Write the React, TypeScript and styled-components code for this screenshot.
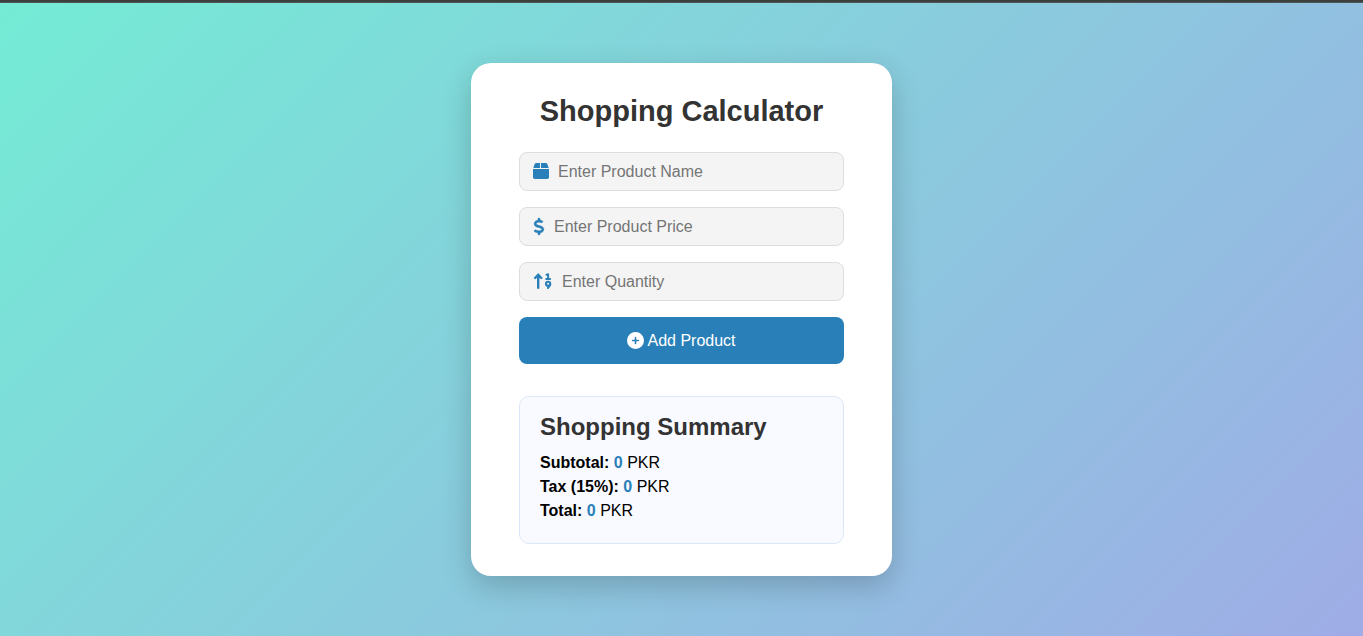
import React, { useState } from "react";
import styled, { createGlobalStyle } from "styled-components";
import { FaCirclePlus, FaDollarSign } from "react-icons/fa6";

const GlobalStyle = createGlobalStyle`
  *, *::before, *::after { box-sizing: border-box; }
  body {
    margin: 0;
    font-family: "Liberation Sans", Arial, sans-serif;
    font-size: 16px;
    color: #000;
  }
`;

const Page = styled.div`
  display: flex;
  flex-direction: column;
  min-height: 100vh;
`;

const TopStrip = styled.div`
  height: 3px;
  background: #3b403f;
  border-bottom: 1px solid #505654;
`;

const Main = styled.main`
  flex: 1;
  display: flex;
  align-items: center;
  justify-content: center;
  padding: 16px;
  background: linear-gradient(135deg, #74ebd5, #9face6);
`;

const Card = styled.section`
  width: 100%;
  max-width: 421px;
  padding: 32px 48px;
  border-radius: 20px;
  background: #fff;
  box-shadow: 0 10px 30px rgba(0, 0, 0, 0.2);
`;

const Title = styled.h1`
  margin: 0 0 24px;
  font-size: 29px;
  line-height: 33px;
  text-align: center;
  color: #333;
`;

const Form = styled.form`
  display: flex;
  flex-direction: column;
  gap: 16px;
`;

const Field = styled.label<{ $iconWidth: number }>`
  display: flex;
  align-items: center;
  gap: 9px;
  height: 39px;
  padding: 0 13px;
  border: 1px solid #ddd;
  border-radius: 8px;
  background: #f4f4f4;

  svg {
    flex: none;
    width: ${(p) => p.$iconWidth}px;
    height: 17px;
    overflow: visible;
    color: #2980b9;
  }
`;

const PriceIcon = styled(FaDollarSign)`
  stroke-width: 16px;
`;

const TextInput = styled.input`
  flex: 1;
  min-width: 0;
  padding: 0;
  border: 0;
  outline: 0;
  background: transparent;
  font: inherit;
  line-height: 20px;
  color: #333;

  &::placeholder {
    color: #757575;
  }
`;

const AddButton = styled.button`
  display: flex;
  align-items: center;
  justify-content: center;
  gap: 3px;
  height: 47px;
  border: 0;
  border-radius: 8px;
  background: #2980b9;
  font: inherit;
  line-height: 20px;
  color: #fff;
  cursor: pointer;

  svg {
    width: 17px;
    height: 17px;
  }
`;

const Summary = styled.section`
  margin-top: 32px;
  padding: 16px 20px 20px;
  border: 1px solid #dde6f8;
  border-radius: 10px;
  background: #f9faff;
`;

const SummaryTitle = styled.h2`
  margin: 0 0 10px;
  font-size: 24px;
  line-height: 28px;
  color: #333;
`;

const SummaryRow = styled.p`
  margin: 0;
  line-height: 24px;
`;

const Amount = styled.span`
  font-weight: bold;
  color: #2980b9;
`;

const TAX_RATE = 0.15;

// A closed parcel: two lid flaps over a solid body.
function BoxIcon() {
  return (
    <svg viewBox="0 0 16 17" fill="currentColor" aria-hidden="true">
      <path d="M3.4 0H7V5H0.3L1.5 1.4Q2 0 3.4 0Z" />
      <path d="M8 0H12.6Q14 0 14.5 1.4L15.7 5H8Z" />
      <path d="M0 6H16V14.2Q16 16 14.2 16H1.8Q0 16 0 14.2Z" />
    </svg>
  );
}

// An upward arrow beside two small counting marks.
function QuantityIcon() {
  return (
    <svg
      viewBox="0 0 20 17"
      fill="none"
      stroke="currentColor"
      strokeWidth="2.4"
      strokeLinecap="round"
      strokeLinejoin="round"
      aria-hidden="true"
    >
      <path d="M5.2 1.8V14.8M2.1 5L5.2 1.8L8.3 5" />
      <path strokeWidth="2" d="M13.5 1.8L15.1 1.3V5.8M13.2 5.9H17.1" />
      <circle strokeWidth="2.1" cx="15.1" cy="10.8" r="2.1" />
      <path strokeWidth="2.1" d="M17.2 11.2Q17.1 12.8 15 15" />
    </svg>
  );
}

export default function App() {
  const [name, setName] = useState("");
  const [price, setPrice] = useState("");
  const [quantity, setQuantity] = useState("");
  const [subtotal, setSubtotal] = useState(0);

  const addProduct = (event: React.FormEvent) => {
    event.preventDefault();
    setSubtotal(subtotal + (Number(price) || 0) * (Number(quantity) || 0));
    setName("");
    setPrice("");
    setQuantity("");
  };

  const tax = subtotal * TAX_RATE;
  const rows = [
    { label: "Subtotal:", value: subtotal },
    { label: "Tax (15%):", value: tax },
    { label: "Total:", value: subtotal + tax },
  ];

  return (
    <Page>
      <GlobalStyle />
      <TopStrip />
      <Main>
        <Card>
          <Title>Shopping Calculator</Title>
          <Form onSubmit={addProduct}>
            <Field $iconWidth={16}>
              <BoxIcon />
              <TextInput
                aria-label="Product name"
                placeholder="Enter Product Name"
                value={name}
                onChange={(e) => setName(e.target.value)}
              />
            </Field>
            <Field $iconWidth={12}>
              <PriceIcon />
              <TextInput
                aria-label="Product price"
                inputMode="decimal"
                placeholder="Enter Product Price"
                value={price}
                onChange={(e) => setPrice(e.target.value)}
              />
            </Field>
            <Field $iconWidth={20}>
              <QuantityIcon />
              <TextInput
                aria-label="Quantity"
                inputMode="numeric"
                placeholder="Enter Quantity"
                value={quantity}
                onChange={(e) => setQuantity(e.target.value)}
              />
            </Field>
            <AddButton type="submit">
              <FaCirclePlus />
              Add Product
            </AddButton>
          </Form>
          <Summary>
            <SummaryTitle>Shopping Summary</SummaryTitle>
            {rows.map((row) => (
              <SummaryRow key={row.label}>
                <strong>{row.label}</strong> <Amount>{row.value}</Amount> PKR
              </SummaryRow>
            ))}
          </Summary>
        </Card>
      </Main>
    </Page>
  );
}
